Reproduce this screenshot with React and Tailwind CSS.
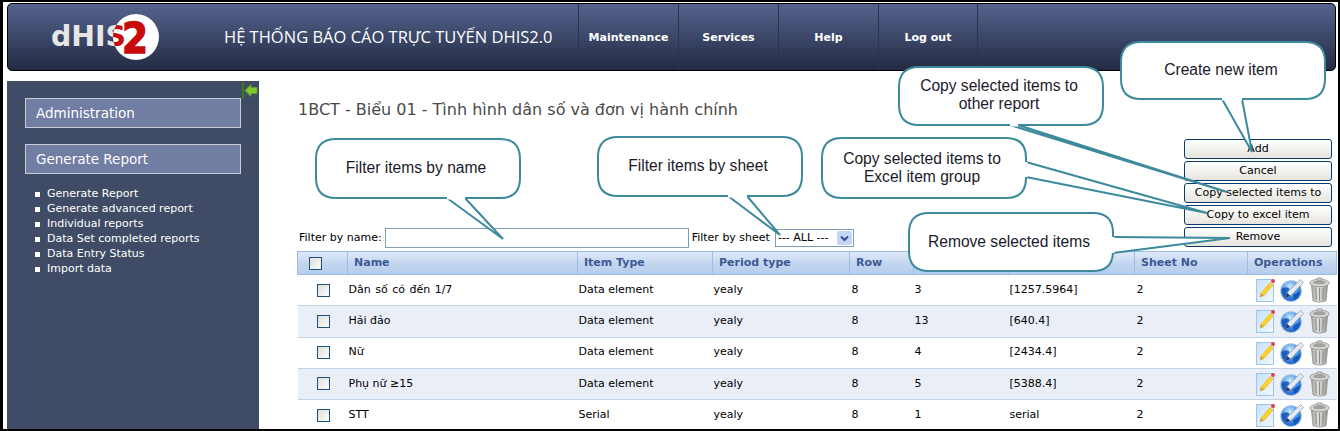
import React from 'react';

const nav = ['Maintenance', 'Services', 'Help', 'Log out'];
const reportLinks = [
  'Generate Report',
  'Generate advanced report',
  'Individual reports',
  'Data Set completed reports',
  'Data Entry Status',
  'Import data',
];
const actions = ['Add', 'Cancel', 'Copy selected items to', 'Copy to excel item', 'Remove'];

const rows = [
  { name: 'Dân số có đến 1/7', type: 'Data element', col: '3', exp: '[1257.5964]', wide: true },
  { name: 'Hải đảo', type: 'Data element', col: '13', exp: '[640.4]' },
  { name: 'Nữ', type: 'Data element', col: '4', exp: '[2434.4]' },
  { name: 'Phụ nữ ≥15', type: 'Data element', col: '5', exp: '[5388.4]' },
  { name: 'STT', type: 'Serial', col: '1', exp: 'serial' },
];

// speech bubbles drawn on top of the page: box + tail (base, tip, base)
const bubbles = [
  { x: 1121, y: 42, w: 204, h: 57, tail: [1222, 99, 1252, 152, 1242, 99], dy: 1, lines: ['Create new item'] },
  { x: 899, y: 67, w: 204, h: 58, tail: [1010, 125, 1227, 192, 1018, 125], dy: 1, lines: ['Copy selected items to', 'other report'] },
  { x: 822, y: 138, w: 204, h: 60, tail: [1026, 162, 1207, 213, 1026, 177], dy: 0, lines: ['Copy selected items to', 'Excel item group'] },
  { x: 909, y: 213, w: 204, h: 58, tail: [1113, 237, 1230, 238, 1113, 253], dy: 0, lines: ['Remove selected items'] },
  { x: 316, y: 139, w: 204, h: 59, tail: [447, 198, 503, 239, 465, 198], dy: 1, lines: ['Filter items by name'] },
  { x: 598, y: 137, w: 204, h: 59, tail: [728, 196, 780, 235, 747, 196], dy: 1, lines: ['Filter items by sheet'] },
];

function bubblePath(b) {
  const r = 20;
  return `M${b.x + r} ${b.y} H${b.x + b.w - r} Q${b.x + b.w} ${b.y} ${b.x + b.w} ${b.y + r} V${b.y + b.h - r} Q${b.x + b.w} ${b.y + b.h} ${b.x + b.w - r} ${b.y + b.h} H${b.x + r} Q${b.x} ${b.y + b.h} ${b.x} ${b.y + b.h - r} V${b.y + r} Q${b.x} ${b.y} ${b.x + r} ${b.y} Z`;
}

function Logo() {
  return (
    <svg width="120" height="50" viewBox="0 0 120 50" className="shrink-0">
      <defs>
        <clipPath id="logo-circle">
          <circle cx="91" cy="25" r="23" />
        </clipPath>
      </defs>
      <text x="6" y="34" fill="#e6e6e6" fontFamily="'DejaVu Sans', sans-serif" fontWeight="700" fontSize="28" textLength="75" lengthAdjust="spacingAndGlyphs">dHIS</text>
      <circle cx="91" cy="25" r="23" fill="#ffffff" />
      <g clipPath="url(#logo-circle)">
        <text x="6" y="34" fill="#c80a0a" fontFamily="'DejaVu Sans', sans-serif" fontWeight="700" fontSize="28" textLength="75" lengthAdjust="spacingAndGlyphs">dHIS</text>
      </g>
      <text x="77" y="41" fill="#c80a0a" stroke="#c80a0a" strokeWidth="1.5" fontFamily="'DejaVu Sans', sans-serif" fontWeight="700" fontSize="42" textLength="26" lengthAdjust="spacingAndGlyphs">2</text>
    </svg>
  );
}

function EditIcon() {
  return (
    <svg width="20" height="24" viewBox="0 0 20 24" className="shrink-0">
      <defs>
        <linearGradient id="page-fill" x1="0" x2="1" y1="0" y2="1">
          <stop offset="0%" stopColor="#c6e0f8" />
          <stop offset="100%" stopColor="#f2f8fe" />
        </linearGradient>
      </defs>
      <rect x="0.5" y="1.5" width="17" height="22" fill="url(#page-fill)" stroke="#9cc6ec" />
      <path d="M4 19 L5 15 L14 4.5 L17 7 L8 17.5 Z" fill="#fbd22e" stroke="#e0a810" strokeWidth="0.5" />
      <path d="M4 19 L5 15 L8 17.5 Z" fill="#c9a05a" />
      <circle cx="17" cy="3" r="2" fill="#e0404a" />
    </svg>
  );
}

function GlobeIcon() {
  return (
    <svg width="24" height="24" viewBox="0 0 24 24" className="shrink-0">
      <defs>
        <radialGradient id="globe-fill" cx="45%" cy="30%" r="75%">
          <stop offset="0%" stopColor="#d4eafc" />
          <stop offset="50%" stopColor="#4d9bea" />
          <stop offset="100%" stopColor="#1258c4" />
        </radialGradient>
      </defs>
      <circle cx="11" cy="13" r="10.5" fill="url(#globe-fill)" stroke="#b4c8e2" strokeWidth="0.8" />
      <path d="M1.5 11 Q5 8 9 10 Q10 14 6 15 L6 20 Q2 17 1.5 11 Z M13 17 L20 13 Q20 18 14 22 Z" fill="#0d4cb0" opacity="0.8" />
      <path d="M5 20 L7 14.5 L20.5 1.5 L23.5 4.5 L10.5 18 Z" fill="#e6e9f0" stroke="#7a88a4" strokeWidth="0.6" />
      <path d="M5 20 L7 14.5 L10.5 18 Z" fill="#24407c" />
    </svg>
  );
}

function TrashIcon() {
  return (
    <svg width="23" height="26" viewBox="0 0 20 24" className="shrink-0">
      <defs>
        <linearGradient id="trash-fill" x1="0" x2="1" y1="0" y2="0">
          <stop offset="0%" stopColor="#a2a39f" />
          <stop offset="45%" stopColor="#e4e5e1" />
          <stop offset="100%" stopColor="#90918d" />
        </linearGradient>
      </defs>
      <path d="M2.5 7 L4 22 Q10 24.5 16 22 L17.5 7 Z" fill="url(#trash-fill)" stroke="#82837f" strokeWidth="0.6" />
      <path d="M6.5 10 L7 21 M10 10 V22 M13.5 10 L13 21" stroke="#8c8d88" strokeWidth="1" />
      <ellipse cx="10" cy="5.5" rx="9" ry="3.5" fill="#d5d6d2" stroke="#82837f" strokeWidth="0.6" />
      <ellipse cx="10" cy="5" rx="6" ry="1.8" fill="#a2a39f" />
      <rect x="7.5" y="0.8" width="5" height="2.6" rx="1" fill="#c8c9c5" stroke="#82837f" strokeWidth="0.5" />
    </svg>
  );
}

function Check() {
  return (
    <span className="block w-[13px] h-[13px] border border-[#1c5180] bg-gradient-to-br from-[#dcdcd7] to-white" />
  );
}

function SideHeading({ children }) {
  return (
    <div className="h-[30px] w-[216px] flex items-center pl-[10px] bg-[#717da3] border border-[#c8cbd3] text-white text-[13.5px]">
      {children}
    </div>
  );
}

export default function App() {
  return (
    <div className="relative w-[1340px] h-[431px] overflow-hidden bg-white font-['DejaVu_Sans',sans-serif] text-[11px] text-black">
      <div className="flex flex-col h-full pl-[7px] pr-[4px] pb-[2px] pt-[2px] bg-white">
        {/* top bar */}
        <header className="h-[68px] mt-[1px] shrink-0 flex rounded-[5px] border border-black bg-gradient-to-b from-[#54628e] via-[#3c4768] to-[#232b43] text-white">
          <div className="w-[216px] pl-[37px] pt-[8px] shrink-0">
            <Logo />
          </div>
          <div className="w-[354px] shrink-0 flex items-center pt-[1px] text-[16.5px] font-['Open_Sans',sans-serif] whitespace-nowrap">
            HỆ THỐNG BÁO CÁO TRỰC TUYẾN DHIS2.0
          </div>
          <nav className="flex">
            {nav.map((n) => (
              <div key={n} className="w-[100px] flex items-center justify-center pt-[2px] border-l border-[#2a3350] font-bold text-[11px] last:border-r">
                {n}
              </div>
            ))}
          </nav>
        </header>

        <div className="flex flex-1 min-h-0 mt-[10px]">
          {/* left menu */}
          <aside className="relative w-[252px] shrink-0 bg-[#404c66] pt-[17px] pl-[18px] text-white">
            <div className="absolute top-[1px] right-[1px]">
              <svg width="16" height="17" viewBox="0 0 16 17">
                <rect x="0" y="0" width="2" height="17" fill="#3f7a12" />
                <path d="M3 8.5 L9 2.5 V5.5 H15 V11.5 H9 V14.5 Z" fill="#7fc534" stroke="#5fa01f" strokeWidth="0.8" />
              </svg>
            </div>
            <SideHeading>Administration</SideHeading>
            <div className="mt-[16px]">
              <SideHeading>Generate Report</SideHeading>
            </div>
            <ul className="mt-[13px] pl-[10px]">
              {reportLinks.map((l) => (
                <li key={l} className="h-[15px] flex items-center gap-[7px] whitespace-nowrap">
                  <span className="w-[5px] h-[5px] bg-white shrink-0" />
                  {l}
                </li>
              ))}
            </ul>
          </aside>

          {/* content */}
          <main className="flex-1 min-w-0 pl-[38px] flex flex-col">
            <h1 className="mt-[19px] pl-[1px] h-[20px] text-[16px] leading-[20px] text-[#4a4a4a] font-normal whitespace-nowrap">
              1BCT - Biểu 01 - Tình hình dân số và đơn vị hành chính
            </h1>
            <div className="flex items-start justify-between mt-[20px] pr-[4px]">
              <div className="flex items-center h-[20px] mt-[88px] pl-[2px] gap-[4px] whitespace-nowrap">
                <span className="mr-[-1px]">Filter by name:</span>
                <input className="w-[304px] h-[20px] border border-[#7f9db9] outline-none" />
                <span className="ml-[-1px] mr-[1px]">Filter by sheet</span>
                <span className="relative block w-[79px] h-[18px] border border-[#7f9db9] pl-[2px] leading-[16px]">
                  --- ALL ---
                  <span className="absolute right-[1px] top-[1px] w-[15px] h-[14px] rounded-[2px] bg-[#c5d5f5] flex items-center justify-center">
                    <svg width="9" height="7" viewBox="0 0 9 7">
                      <path d="M1 1.5 L4.5 5 L8 1.5" fill="none" stroke="#3a4f8a" strokeWidth="2" />
                    </svg>
                  </span>
                </span>
              </div>
              <div className="flex flex-col gap-[2px] w-[148px] mt-[-1px]">
                {actions.map((a) => (
                  <button key={a} className="h-[20px] border border-[#0a3a6e] rounded-[3px] bg-gradient-to-b from-white to-[#e6e4dc] text-center text-[11px] leading-[16px] whitespace-nowrap">
                    {a}
                  </button>
                ))}
              </div>
            </div>

            <table className="mt-[3px] w-[1039px] table-fixed border-collapse">
              <colgroup>
                <col className="w-[50px]" />
                <col className="w-[230px]" />
                <col className="w-[135px]" />
                <col className="w-[137px]" />
                <col className="w-[64px]" />
                <col className="w-[95px]" />
                <col className="w-[126px]" />
                <col className="w-[113px]" />
                <col className="w-[89px]" />
              </colgroup>
              <thead>
                <tr className="h-[23px] bg-gradient-to-b from-[#e0eaf8] via-[#c3d6f0] to-[#b3ccec] text-[#3d5a94] font-bold text-left">
                  <th className="border border-[#9cbde6] pl-[11px]"><Check /></th>
                  {['Name', 'Item Type', 'Period type', 'Row', '', '', 'Sheet No', 'Operations'].map((h, i) => (
                    <th key={i} className="border border-[#9cbde6] pl-[6px] font-bold">{h}</th>
                  ))}
                </tr>
              </thead>
              <tbody>
                {rows.map((r, i) => (
                  <tr key={r.name} className={`h-[31.25px] border-b border-[#c3d3ea] ${i % 2 ? 'bg-[#eaeff7]' : 'bg-white'} last:border-b-0`}>
                    <td className="pl-[19px]"><Check /></td>
                    <td className={`pl-[1px] ${r.wide ? '[word-spacing:1px]' : ''}`}>{r.name}</td>
                    <td className="pl-[1px]">{r.type}</td>
                    <td className="pl-[1px]">yealy</td>
                    <td className="pl-[2px]">8</td>
                    <td className="pl-[1px]">{r.col}</td>
                    <td className="pl-[1px]">{r.exp}</td>
                    <td className="pl-[2px]">2</td>
                    <td className="pl-[8px]">
                      <div className="flex items-center gap-[4px]">
                        <EditIcon />
                        <GlobeIcon />
                        <TrashIcon />
                      </div>
                    </td>
                  </tr>
                ))}
              </tbody>
            </table>
          </main>
        </div>
      </div>

      {/* annotation bubbles on top of the page */}
      <svg width="1340" height="431" className="absolute inset-0 pointer-events-none">
        {bubbles.map((b, i) => {
          const [x1, y1, tx, ty, x2, y2] = b.tail;
          return (
            <g key={i}>
              <path d={bubblePath(b)} fill="#ffffff" stroke="#3d8a9c" strokeWidth="2" />
              <path d={`M${x1} ${y1} L${tx} ${ty} L${x2} ${y2}`} fill="#ffffff" stroke="#3d8a9c" strokeWidth="2" />
              <path d={`M${x1} ${y1} L${x2} ${y2}`} stroke="#ffffff" strokeWidth="3" />
            </g>
          );
        })}
      </svg>
      {bubbles.map((b, i) => (
        <div
          key={i}
          className="absolute flex flex-col items-center justify-center text-[15.6px] leading-[18px] text-[#1a1a2a] font-['Liberation_Sans',sans-serif] whitespace-nowrap"
          style={{ left: b.x - 2, top: b.y - b.dy, width: b.w, height: b.h }}
        >
          {b.lines.map((l) => (
            <span key={l}>{l}</span>
          ))}
        </div>
      ))}

      {/* black frame of the screenshot */}
      <div className="absolute inset-0 pointer-events-none border-t-[2px] border-b-[2px] border-l-[3px] border-r-[2px] border-black" />
    </div>
  );
}
